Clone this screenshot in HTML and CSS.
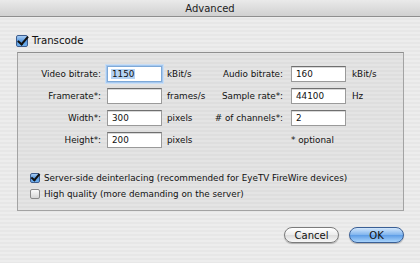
FILE: index.html
```html
<!DOCTYPE html>
<html lang="en">
<head>
  <meta charset="UTF-8" />
  <title>Advanced</title>
  <link rel="stylesheet" href="styles.css">
</head>
<body>
  <div class="window">
    <div class="titlebar">Advanced</div>

    <div class="content">
      <label class="check big checked"><span class="box"></span>Transcode</label>

      <div class="group">
        <div class="form-grid">
          <span class="lbl">Video bitrate:</span>
          <span class="field focused"><span class="sel">1150</span></span>
          <span class="unit">kBit/s</span>
          <span class="lbl">Audio bitrate:</span>
          <span class="field">160</span>
          <span class="unit">kBit/s</span>

          <span class="lbl">Framerate*:</span>
          <span class="field"></span>
          <span class="unit">frames/s</span>
          <span class="lbl">Sample rate*:</span>
          <span class="field">44100</span>
          <span class="unit">Hz</span>

          <span class="lbl">Width*:</span>
          <span class="field">300</span>
          <span class="unit">pixels</span>
          <span class="lbl"># of channels*:</span>
          <span class="field">2</span>
          <span class="unit"></span>

          <span class="lbl">Height*:</span>
          <span class="field">200</span>
          <span class="unit">pixels</span>
          <span class="lbl"></span>
          <span class="note">* optional</span>
        </div>

        <div class="options">
          <label class="check checked"><span class="box"></span>Server-side deinterlacing (recommended for EyeTV FireWire devices)</label>
          <label class="check"><span class="box"></span>High quality (more demanding on the server)</label>
        </div>
      </div>

      <div class="buttons">
        <button class="btn">Cancel</button>
        <button class="btn default">OK</button>
      </div>
    </div>
  </div>
</body>
</html>
```

FILE: styles.css
```css
html, body {
  margin: 0;
  padding: 0;
  width: 420px;
  height: 263px;
  overflow: hidden;
  font-family: "DejaVu Sans", Verdana, sans-serif;
  font-size: 8.8px;
  color: #111;
}

.window {
  height: 263px;
  background: repeating-linear-gradient(to bottom, #ededed 0 2px, #e7e7e7 2px 4px);
}

.titlebar {
  height: 17px;
  line-height: 17px;
  text-align: center;
  font-size: 10px;
  color: #222;
  background: linear-gradient(to bottom, #eaeaea, #d0d0d0);
  border-bottom: 1px solid #8e8e8e;
  box-sizing: border-box;
}

.content {
  padding: 17px 16px 0 16px;
}

/* checkboxes */
.check {
  display: flex;
  align-items: center;
  gap: 4px;
  height: 12px;
}

.check .box {
  width: 10px;
  height: 10px;
  box-sizing: border-box;
  border: 1px solid #8a8a8a;
  border-radius: 2px;
  background: linear-gradient(to bottom, #fbfbfb, #d6d6d6);
  position: relative;
}

.check.checked .box {
  border-color: #3d5d8e;
  background: linear-gradient(to bottom, #a9cdf3, #5a9ae0 50%, #6fb0ee);
}

.check.checked .box::after {
  content: "";
  position: absolute;
  left: 2px;
  top: -2px;
  width: 3px;
  height: 7px;
  border-right: 2px solid #111;
  border-bottom: 2px solid #111;
  transform: rotate(40deg);
}

.check.big {
  font-size: 10.2px;
  height: 13px;
}

.check.big .box {
  width: 12px;
  height: 12px;
}

.check.big .box::after {
  left: 3px;
  top: -2px;
  width: 4px;
  height: 9px;
}

/* group box */
.group {
  margin: 5px 0 0 1px;
  width: 387px;
  height: 159px;
  box-sizing: border-box;
  border: 1px solid #a3a3a3;
  border-top-color: #8f8f8f;
  background: rgba(0, 0, 0, 0.035);
  padding-top: 13px;
}

.form-grid {
  display: grid;
  grid-template-columns: 89px 60px 47px 77px 61px auto;
  grid-auto-rows: 16px;
  row-gap: 6px;
  align-items: center;
}

.lbl {
  text-align: right;
  padding-right: 6px;
  white-space: nowrap;
}

.lbl:nth-child(6n+4) {
  padding-right: 8px;
}

.field {
  width: 55px;
  height: 16px;
  box-sizing: border-box;
  background: #fff;
  border: 1px solid #9a9a9a;
  border-top-color: #6f6f6f;
  box-shadow: inset 0 1px 0 #d8d8d8;
  padding: 1px 0 0 4px;
  line-height: 13px;
}

.field.focused {
  border-color: #7ea9d8;
  box-shadow: 0 0 0 1px #a6c8ee, 0 0 0 2px #c9def5;
  padding-left: 3px;
}

.sel {
  background: #b5d3f3;
  padding: 0 1px;
}

.unit {
  white-space: nowrap;
}

.note {
  grid-column: 5 / 7;
  white-space: nowrap;
}

.options {
  margin: 24px 0 0 12px;
  display: flex;
  flex-direction: column;
  gap: 4px;
}

/* buttons */
.buttons {
  display: flex;
  justify-content: flex-end;
  gap: 10px;
  margin: 16px 0 0 0;
}

.btn {
  width: 55px;
  height: 16px;
  padding: 0;
  font-family: "DejaVu Sans", Verdana, sans-serif;
  font-size: 10px;
  color: #111;
  border: 1px solid #7b7b7b;
  border-radius: 8px;
  background: linear-gradient(to bottom, #ffffff, #ececec 50%, #dcdcdc 51%, #f7f7f7);
  box-shadow: 0 1px 1px rgba(0, 0, 0, 0.25);
}

.btn.default {
  border-color: #3a5f95;
  background: linear-gradient(to bottom, #d2e6fb, #7fb4ee 50%, #5c9ce6 51%, #a8d3fb);
}
```
